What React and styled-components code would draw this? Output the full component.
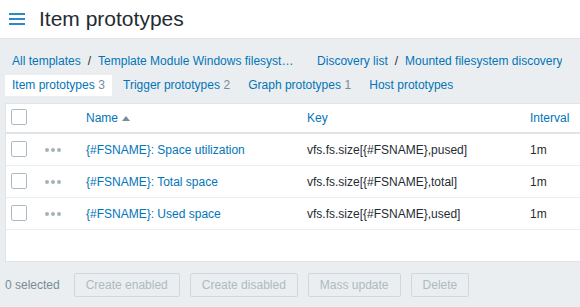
import React from 'react';
import styled, { createGlobalStyle } from 'styled-components';

const GlobalStyle = createGlobalStyle`
  html, body {
    margin: 0;
    padding: 0;
    background: #ebeef0;
    font-family: "Liberation Sans", Arial, sans-serif;
    font-size: 12px;
    color: #1f2c33;
    overflow: hidden;
  }
`;

const Header = styled.header`
  height: 38px;
  background: #fff;
  border-bottom: 1px solid #dfe4e7;
  display: flex;
  align-items: center;
  padding-left: 9px;
  gap: 14px;
`;

const Title = styled.h1`
  margin: 0;
  font-size: 21px;
  font-weight: 400;
  color: #1f2c33;
  line-height: 38px;
`;

const Main = styled.main`
  padding: 0 5px;
`;

const Breadcrumbs = styled.nav`
  margin-top: 13px;
  height: 18px;
  line-height: 18px;
  padding-left: 7px;
  display: flex;
  gap: 23px;
  white-space: nowrap;
`;

const CrumbGroup = styled.div`
  display: flex;
  align-items: center;
  gap: 7px;
`;

const Link = styled.a`
  color: #0275b8;
  text-decoration: none;
  display: inline-block;
  max-width: ${p => p.$max ? `${p.$max}px` : 'none'};
  overflow: hidden;
  text-overflow: ellipsis;
  white-space: nowrap;
`;

const Sep = styled.span`
  color: #1f2c33;
`;

const Tabs = styled.ul`
  list-style: none;
  margin: 5px 0 0;
  padding: 0;
  display: flex;
  gap: 4px;
  height: 21px;
`;

const Tab = styled.li`
  padding: 0 7px;
  line-height: 21px;
  background: ${p => p.$active ? '#fff' : 'transparent'};
  color: #0275b8;
  white-space: nowrap;
`;

const Count = styled.span`
  color: #768d99;
  margin-left: 3.6px;
`;

const Table = styled.div`
  margin-top: 7px;
  width: 640px;
  height: 159px;
  box-sizing: border-box;
  background: #fff;
  border: 1px solid #dfe4e7;
`;

const Row = styled.div`
  display: grid;
  grid-template-columns: 30px 45px 221px 223px 1fr;
  align-items: center;
  height: ${p => p.$head ? '28px' : '31px'};
  border-bottom: ${p => p.$head ? '2px solid #dfe4e7' : '1px solid #ebeef0'};
`;

const Cell = styled.div`
  padding: 0 5px;
  white-space: nowrap;
  display: flex;
  align-items: center;
  color: ${p => p.$link ? '#0275b8' : '#1f2c33'};
`;

const DotsCell = styled(Cell)`
  padding-left: 9px;
`;

const Checkbox = styled.span`
  width: 16px;
  height: 16px;
  box-sizing: border-box;
  border: 1px solid #acbbc2;
  border-radius: 2px;
  background: #fff;
  margin-top: -2px;
`;

const SortArrow = styled.span`
  margin-left: 4px;
  width: 0;
  height: 0;
  border-left: 4px solid transparent;
  border-right: 4px solid transparent;
  border-bottom: 5px solid #768d99;
`;

const Footer = styled.div`
  margin-top: 11px;
  display: flex;
  align-items: center;
  gap: 10px;
`;

const Selected = styled.span`
  color: #768d99;
  margin-right: 4px;
`;

const Button = styled.button`
  height: 24px;
  padding: 0 11px;
  font-family: inherit;
  font-size: 12px;
  color: #acbbc2;
  background: #ebeef0;
  border: 1px solid #cfd8dc;
  border-radius: 2px;
`;

const MenuIcon = () => (
  <svg width="16" height="12" viewBox="0 0 16 12">
    <rect x="0" y="0" width="16" height="2" fill="#2f8ac4" />
    <rect x="0" y="5" width="16" height="2" fill="#2f8ac4" />
    <rect x="0" y="10" width="16" height="2" fill="#2f8ac4" />
  </svg>
);

const Dots = () => (
  <svg width="16" height="4" viewBox="0 0 16 4">
    <circle cx="2" cy="2" r="2" fill="#a5b3bb" />
    <circle cx="8" cy="2" r="2" fill="#a5b3bb" />
    <circle cx="14" cy="2" r="2" fill="#a5b3bb" />
  </svg>
);

const items = [
  { name: '{#FSNAME}: Space utilization', key: 'vfs.fs.size[{#FSNAME},pused]', interval: '1m' },
  { name: '{#FSNAME}: Total space', key: 'vfs.fs.size[{#FSNAME},total]', interval: '1m' },
  { name: '{#FSNAME}: Used space', key: 'vfs.fs.size[{#FSNAME},used]', interval: '1m' },
];

export default function App() {
  return (
    <>
      <GlobalStyle />
      <Header>
        <MenuIcon />
        <Title>Item prototypes</Title>
      </Header>
      <Main>
        <Breadcrumbs>
          <CrumbGroup>
            <Link>All templates</Link>
            <Sep>/</Sep>
            <Link $max={196}>Template Module Windows filesystems by Zabbix agent</Link>
          </CrumbGroup>
          <CrumbGroup>
            <Link>Discovery list</Link>
            <Sep>/</Sep>
            <Link>Mounted filesystem discovery</Link>
          </CrumbGroup>
        </Breadcrumbs>
        <Tabs>
          <Tab $active>Item prototypes<Count>3</Count></Tab>
          <Tab>Trigger prototypes<Count>2</Count></Tab>
          <Tab>Graph prototypes<Count>1</Count></Tab>
          <Tab>Host prototypes</Tab>
        </Tabs>
        <Table>
          <Row $head>
            <Cell><Checkbox /></Cell>
            <Cell />
            <Cell $link>Name<SortArrow /></Cell>
            <Cell $link>Key</Cell>
            <Cell $link>Interval</Cell>
          </Row>
          {items.map(it => (
            <Row key={it.key}>
              <Cell><Checkbox /></Cell>
              <DotsCell><Dots /></DotsCell>
              <Cell $link>{it.name}</Cell>
              <Cell>{it.key}</Cell>
              <Cell>{it.interval}</Cell>
            </Row>
          ))}
        </Table>
        <Footer>
          <Selected>0 selected</Selected>
          <Button disabled>Create enabled</Button>
          <Button disabled>Create disabled</Button>
          <Button disabled>Mass update</Button>
          <Button disabled>Delete</Button>
        </Footer>
      </Main>
    </>
  );
}
